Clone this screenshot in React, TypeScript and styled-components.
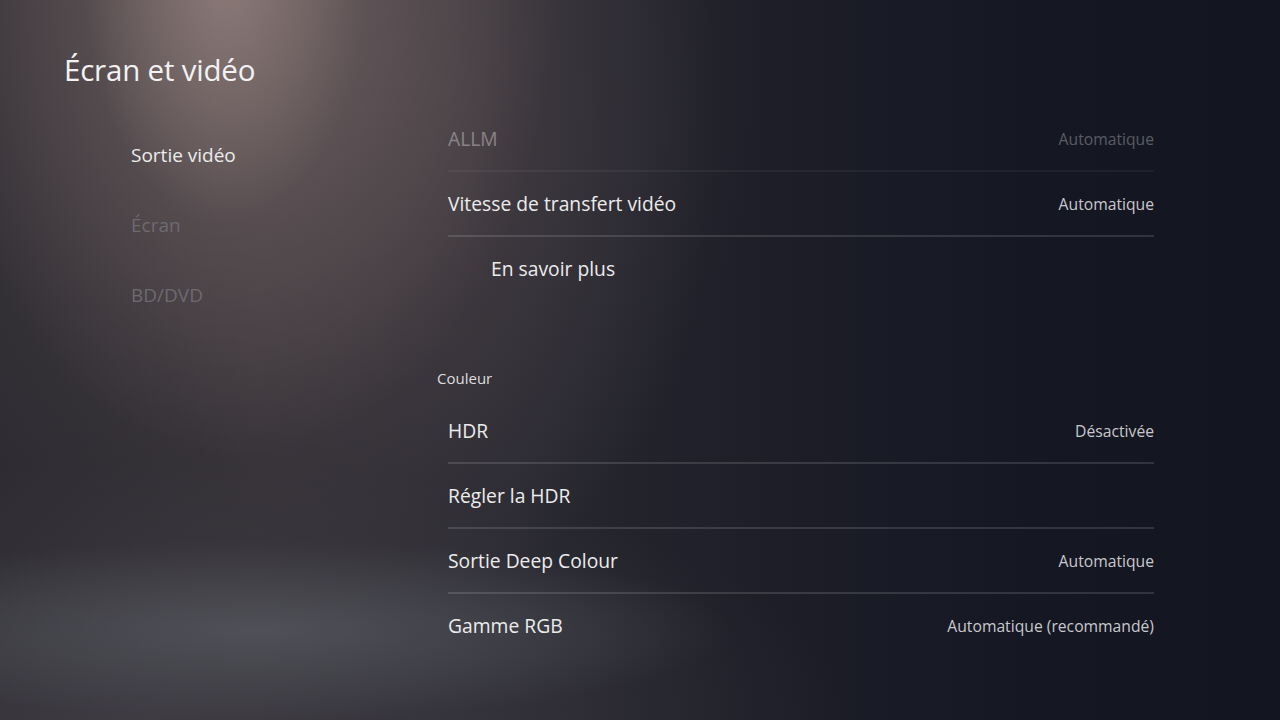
import React from "react";
import styled, { createGlobalStyle } from "styled-components";

const GlobalStyle = createGlobalStyle`
  html, body { margin: 0; padding: 0; background: #131520; }
  body { font-family: "Open Sans", "Noto Sans", sans-serif; -webkit-font-smoothing: antialiased; }
  * { box-sizing: border-box; }
`;

const Screen = styled.div`
  position: relative;
  width: 1280px;
  height: 720px;
  overflow: hidden;
  color: #ececec;
  background:
    radial-gradient(ellipse 140px 240px at 225px -20px, rgba(150, 132, 128, 0.7), rgba(150, 132, 128, 0) 100%),
    radial-gradient(ellipse 320px 500px at 240px -40px, rgba(118, 102, 102, 0.85), rgba(118, 102, 102, 0) 100%),
    radial-gradient(ellipse 300px 480px at 420px 120px, rgba(80, 70, 74, 0.5), rgba(80, 70, 74, 0) 100%),
    radial-gradient(ellipse 520px 620px at 240px 60px, rgba(88, 78, 82, 0.5), rgba(88, 78, 82, 0) 100%),
    radial-gradient(ellipse 470px 90px at 260px 630px, rgba(86, 90, 96, 0.75), rgba(86, 90, 96, 0) 100%),
    radial-gradient(ellipse 700px 260px at 150px 720px, rgba(70, 66, 74, 0.7), rgba(70, 66, 74, 0) 100%),
    linear-gradient(90deg, #29282e 0%, #2f2d33 20%, #282830 40%, #1d1e28 60%, #151723 80%, #131520 100%);
`;

const Header = styled.header`
  padding: 50px 0 0 64px;
`;

const Title = styled.h1`
  margin: 0;
  font-size: 29.5px;
  line-height: 40px;
  font-weight: 400;
  color: #f2f2f2;
  letter-spacing: -0.2px;
`;

const Body = styled.div`
  display: grid;
  grid-template-columns: 437px 717px;
  align-items: start;
`;

const Nav = styled.nav`
  display: flex;
  flex-direction: column;
  padding: 30px 0 0 131px;
`;

const NavItem = styled.div<{ $active?: boolean }>`
  height: 70px;
  display: flex;
  align-items: center;
  font-size: 19px;
  color: ${(p) => (p.$active ? "#ececec" : "#6d6a70")};
`;

const Content = styled.div`
  display: flex;
  flex-direction: column;
  padding-top: 17px;
`;

const Row = styled.div<{ $faded?: boolean; $indent?: boolean; $divider?: boolean }>`
  height: 65px;
  margin-left: 11px;
  display: flex;
  align-items: center;
  justify-content: space-between;
  padding-left: ${(p) => (p.$indent ? "43px" : "0")};
  border-bottom: 2px solid ${(p) => (p.$divider ? "rgba(255,255,255,0.13)" : "transparent")};
  opacity: ${(p) => (p.$faded ? 0.38 : 1)};
`;

const Label = styled.span`
  font-size: 19.3px;
  color: #ececec;
`;

const Value = styled.span`
  font-size: 15.7px;
  color: #c9c9cd;
`;

const SectionTitle = styled.div`
  margin-top: 65px;
  height: 32px;
  display: flex;
  align-items: flex-start;
  font-size: 15px;
  line-height: 22px;
  color: #dedede;
`;

type Item = { label: string; value?: string; faded?: boolean; indent?: boolean; divider?: boolean };

const video: Item[] = [
  { label: "ALLM", value: "Automatique", faded: true, divider: true },
  { label: "Vitesse de transfert vidéo", value: "Automatique", divider: true },
  { label: "En savoir plus", indent: true },
];

const colour: Item[] = [
  { label: "HDR", value: "Désactivée", divider: true },
  { label: "Régler la HDR", divider: true },
  { label: "Sortie Deep Colour", value: "Automatique", divider: true },
  { label: "Gamme RGB", value: "Automatique (recommandé)" },
];

const renderRow = (it: Item) => (
  <Row key={it.label} $faded={it.faded} $indent={it.indent} $divider={it.divider}>
    <Label>{it.label}</Label>
    {it.value && <Value>{it.value}</Value>}
  </Row>
);

export default function App() {
  return (
    <Screen>
      <GlobalStyle />
      <Header>
        <Title>Écran et vidéo</Title>
      </Header>
      <Body>
        <Nav>
          <NavItem $active>Sortie vidéo</NavItem>
          <NavItem>Écran</NavItem>
          <NavItem>BD/DVD</NavItem>
        </Nav>
        <Content>
          {video.map(renderRow)}
          <SectionTitle>Couleur</SectionTitle>
          {colour.map(renderRow)}
        </Content>
      </Body>
    </Screen>
  );
}
